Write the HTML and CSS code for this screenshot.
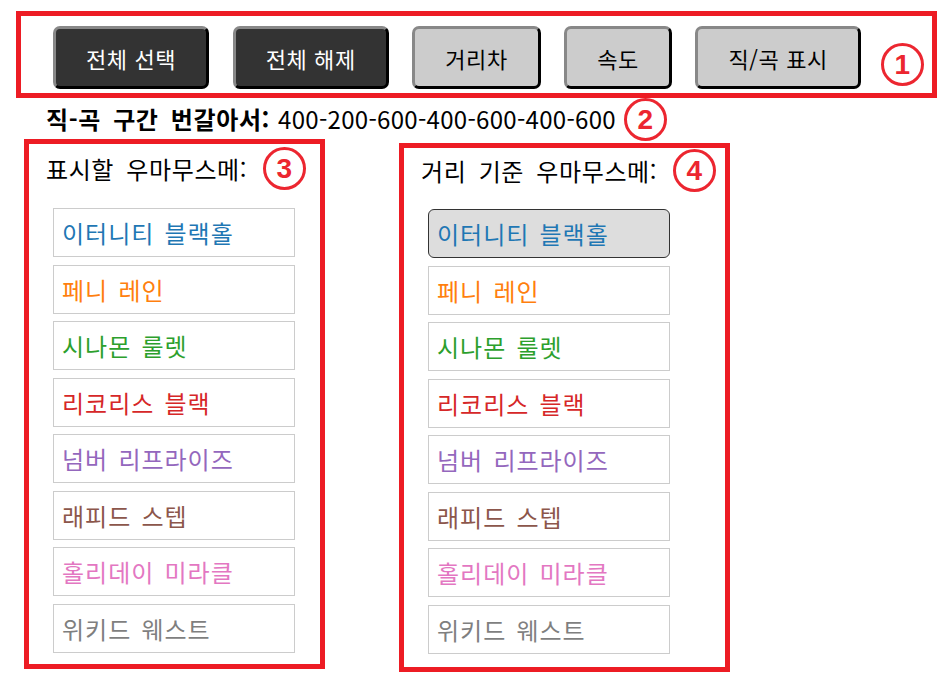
FILE: index.html
```html
<!DOCTYPE html>
<html lang="ko">
<head>
<meta charset="utf-8">
<title>우마무스메</title>
<link rel="stylesheet" href="styles.css">
</head>
<body>
<div class="page">
  <div class="toolbar">
    <button class="btn btn-dark">전체 선택</button>
    <button class="btn btn-dark">전체 해제</button>
    <button class="btn btn-light">거리차</button>
    <button class="btn btn-light">속도</button>
    <button class="btn btn-light">직/곡 표시</button>
    <svg class="badge badge-1" width="43" height="43" viewBox="0 0 43 43"><circle cx="21.5" cy="21.5" r="20" fill="none" stroke="#ec2630" stroke-width="3"/><text x="21.5" y="31" text-anchor="middle" font-family="Liberation Sans, sans-serif" font-weight="700" font-size="28" fill="#ec2630">1</text></svg>
  </div>

  <div class="pattern">
    <b class="pattern-label">직-곡 구간 번갈아서:</b>
    <span class="pattern-value">400-200-600-400-600-400-600</span>
    <svg class="badge badge-2" width="43" height="43" viewBox="0 0 43 43"><circle cx="21.5" cy="21.5" r="20" fill="none" stroke="#ec2630" stroke-width="3"/><text x="21.5" y="31" text-anchor="middle" font-family="Liberation Sans, sans-serif" font-weight="700" font-size="28" fill="#ec2630">2</text></svg>
  </div>

  <div class="columns">
    <section class="panel panel-left">
      <div class="panel-head">
        <span class="panel-title">표시할 우마무스메:</span>
        <svg class="badge" width="43" height="43" viewBox="0 0 43 43"><circle cx="21.5" cy="21.5" r="20" fill="none" stroke="#ec2630" stroke-width="3"/><text x="21.5" y="31" text-anchor="middle" font-family="Liberation Sans, sans-serif" font-weight="700" font-size="28" fill="#ec2630">3</text></svg>
      </div>
      <ul class="list">
        <li class="item c1">이터니티 블랙홀</li>
        <li class="item c2">페니 레인</li>
        <li class="item c3">시나몬 룰렛</li>
        <li class="item c4">리코리스 블랙</li>
        <li class="item c5">넘버 리프라이즈</li>
        <li class="item c6">래피드 스텝</li>
        <li class="item c7">홀리데이 미라클</li>
        <li class="item c8">위키드 웨스트</li>
      </ul>
    </section>

    <section class="panel panel-right">
      <div class="panel-head">
        <span class="panel-title">거리 기준 우마무스메:</span>
        <svg class="badge" width="43" height="43" viewBox="0 0 43 43"><circle cx="21.5" cy="21.5" r="20" fill="none" stroke="#ec2630" stroke-width="3"/><text x="21.5" y="31" text-anchor="middle" font-family="Liberation Sans, sans-serif" font-weight="700" font-size="28" fill="#ec2630">4</text></svg>
      </div>
      <ul class="list">
        <li class="item c1 selected">이터니티 블랙홀</li>
        <li class="item c2">페니 레인</li>
        <li class="item c3">시나몬 룰렛</li>
        <li class="item c4">리코리스 블랙</li>
        <li class="item c5">넘버 리프라이즈</li>
        <li class="item c6">래피드 스텝</li>
        <li class="item c7">홀리데이 미라클</li>
        <li class="item c8">위키드 웨스트</li>
      </ul>
    </section>
  </div>
</div>
</body>
</html>
```

FILE: styles.css
```css
* { box-sizing: border-box; }

body {
  margin: 0;
  background: #fff;
  color: #000;
  font-family: "Noto Sans CJK KR", "Noto Sans", sans-serif;
  letter-spacing: 0.6px;
  word-spacing: 5px;
}

.page {
  width: 941px;
  height: 679px;
  overflow: hidden;
}

.toolbar {
  margin: 11px 0 0 16px;
  width: 921px;
  height: 87px;
  border: 5px solid #ed1c24;
  display: flex;
  align-items: flex-start;
  gap: 23.5px;
  padding: 10px 0 0 32px;
}

.btn {
  height: 63px;
  padding: 0 30px;
  border: 3px solid;
  border-color: #888 #000 #000 #888;
  border-radius: 7px;
  font-family: "Noto Sans CJK KR", sans-serif;
  font-size: 22px;
  letter-spacing: 0.6px;
  word-spacing: 0;
  line-height: 1;
  white-space: nowrap;
}

.btn-dark {
  background: #333;
  color: #fff;
}

.btn-light {
  background: #ccc;
  color: #000;
}

.badge {
  display: block;
  flex: none;
}

.badge-1 {
  margin-top: 17px;
  margin-left: -3px;
}

.pattern {
  margin-left: 46px;
  height: 40px;
  display: flex;
  align-items: center;
  font-size: 24px;
}

.pattern-label {
  font-weight: 700;
  margin-right: 8px;
}

.pattern-value {
  letter-spacing: 0.3px;
}

.badge-2 {
  margin-left: 8px;
  margin-top: 2px;
}

.columns {
  margin: 1px 0 0 24px;
  display: flex;
  align-items: flex-start;
  gap: 74px;
}

.panel {
  border: 5px solid #ed1c24;
}

.panel-left {
  width: 301px;
  height: 530px;
  padding-top: 3px;
}

.panel-right {
  width: 331px;
  height: 529px;
  margin-top: 4px;
  padding-top: 1px;
}

.panel-head {
  height: 43px;
  display: flex;
  align-items: center;
  gap: 16px;
  padding-left: 17px;
  font-size: 24px;
}

.list {
  list-style: none;
  margin: 18px 0 0 24px;
  padding: 0;
  display: flex;
  flex-direction: column;
  gap: 7.57px;
}

.panel-right .list {
  margin-top: 17px;
}

.item {
  width: 242px;
  height: 49px;
  border: 1px solid #ccc;
  padding-left: 8px;
  display: flex;
  align-items: center;
  font-size: 24px;
  letter-spacing: 1px;
  word-spacing: 2.5px;
  white-space: nowrap;
}

.item.selected {
  background: #ddd;
  border-color: #333;
  border-radius: 6px;
}

.c1 { color: #1f77b4; }
.c2 { color: #ff7f0e; }
.c3 { color: #2ca02c; }
.c4 { color: #d62728; }
.c5 { color: #9467bd; }
.c6 { color: #8c564b; }
.c7 { color: #e377c2; }
.c8 { color: #7f7f7f; }
```
